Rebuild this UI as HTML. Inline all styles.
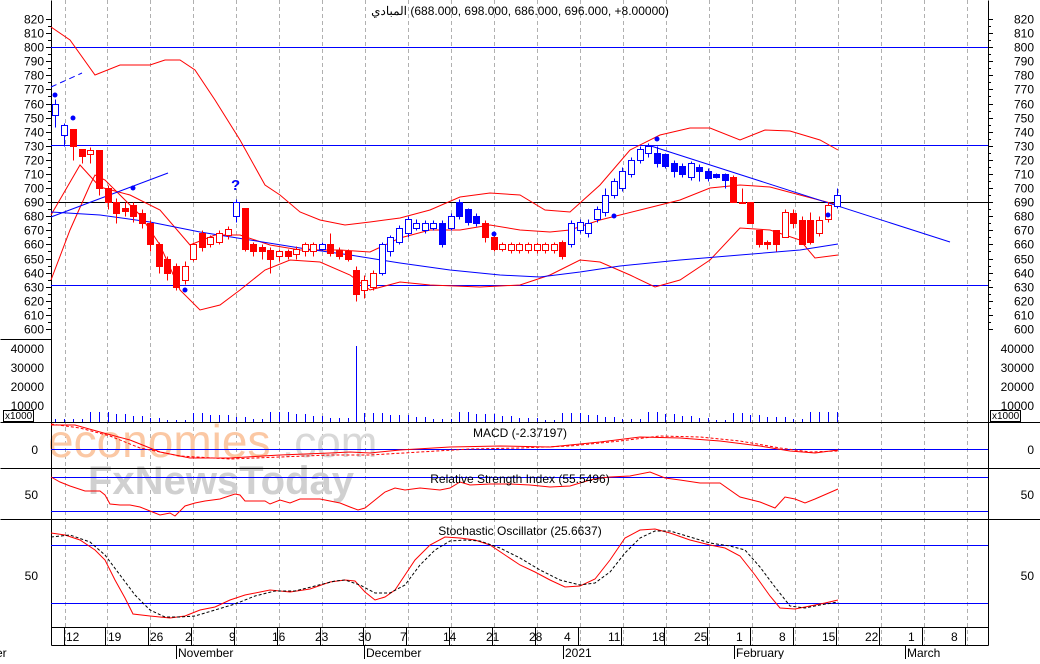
<!DOCTYPE html><html><head><meta charset="utf-8"><style>
body{margin:0;background:#fff;width:1040px;height:659px;overflow:hidden;font-family:"Liberation Sans",sans-serif}
svg text{font-family:"Liberation Sans","Noto Sans CJK SC",sans-serif;font-size:12px;fill:#000}
</style></head><body>
<svg id="s" width="1040" height="659" xmlns="http://www.w3.org/2000/svg">
<rect width="1040" height="659" fill="#fff"/>
<g id="grid" stroke="#b0b0b0" stroke-dasharray="4,3" stroke-width="1"></g>
<g>
<text x="48" y="457" style="font-size:46px;fill:#fbc8a4">economies</text>
<text x="282" y="457" style="font-size:44px;fill:#d8d8d8">.com</text>
<text x="88" y="494" style="font-size:40px;fill:#d0d0d0;font-weight:bold">FxNewsToday</text>
</g>
<g id="main"></g>
<text x="520" y="15" text-anchor="middle" direction="ltr" unicode-bidi="embed">&#x200E;المبادي&#x200E; (688.000, 698.000, 686.000, 696.000, +8.00000)</text>
<text x="520" y="437" text-anchor="middle">MACD (-2.37197)</text>
<text x="520" y="483" text-anchor="middle">Relative Strength Index (55.5496)</text>
<text x="520" y="535" text-anchor="middle">Stochastic Oscillator (25.6637)</text>
</svg>
<script>
const S=document.getElementById('s'),M=document.getElementById('main'),G=document.getElementById('grid');
const NS='http://www.w3.org/2000/svg';
function el(p,t,a,txt){const e=document.createElementNS(NS,t);for(const k in a)e.setAttribute(k,a[k]);if(txt!=null)e.textContent=txt;p.appendChild(e);return e;}
const Y=p=>Math.round(19+(820-p)*1.409)+0.5;
const BL='#0000ff';
[65,107,150,193,236,279,322,365,408,451,494,537,580,623,666,709,752,795,838,881,924,967].forEach(x=>el(G,'line',{x1:x+.5,y1:0,x2:x+.5,y2:645}));
[[51,0,51,645],[988,0,988,645],[0,339,51,339],[0,422,1040,422],[0,468,1040,468],[0,519,1040,519],[51,627,988,627],[51,645,988,645]].forEach(l=>el(M,'line',{x1:l[0]+.5,y1:l[1]+.5,x2:l[2]+.5,y2:l[3]+.5,stroke:'#000'}));
for(let p=600;p<=820;p+=10){const y=Y(p);el(M,'text',{x:44,y:y+4,'text-anchor':'end'},p);el(M,'text',{x:1034,y:y+4,'text-anchor':'end'},p);
el(M,'line',{x1:46,y1:y,x2:51,y2:y,stroke:'#000'});el(M,'line',{x1:988,y1:y,x2:993,y2:y,stroke:'#000'});}
for(let i=0;i<22;i++){const y=Y(605+i*10);el(M,'line',{x1:48,y1:y,x2:51,y2:y,stroke:'#000'});el(M,'line',{x1:988,y1:y,x2:991,y2:y,stroke:'#000'});}
[[40000,349],[30000,368],[20000,387],[10000,406]].forEach(v=>{el(M,'text',{x:44,y:v[1]+4,'text-anchor':'end'},v[0]);el(M,'text',{x:1034,y:v[1]+4,'text-anchor':'end'},v[0]);});
el(M,'rect',{x:3.5,y:410.5,width:30,height:11,fill:'#fff',stroke:'#000'});el(M,'text',{x:5,y:419,style:'font-size:10px'},'x1000');
el(M,'rect',{x:990.5,y:410.5,width:30,height:11,fill:'#fff',stroke:'#000'});el(M,'text',{x:992,y:419,style:'font-size:10px'},'x1000');
el(M,'text',{x:38,y:454,'text-anchor':'end'},'0');el(M,'text',{x:1034,y:454,'text-anchor':'end'},'0');
el(M,'text',{x:38,y:499,'text-anchor':'end'},'50');el(M,'text',{x:1034,y:499,'text-anchor':'end'},'50');
el(M,'text',{x:38,y:580,'text-anchor':'end'},'50');el(M,'text',{x:1034,y:580,'text-anchor':'end'},'50');
[47,145,285,449,477,511,545,603].forEach(h=>el(M,'line',{x1:51,y1:h+.5,x2:988,y2:h+.5,stroke:BL}));
el(M,'line',{x1:51,y1:202.5,x2:988,y2:202.5,stroke:'#000'});
const pl=(pts,c,dash,w)=>el(M,'polyline',{points:pts,fill:'none',stroke:c,'stroke-width':w||1,'stroke-dasharray':dash||'none'});
pl('51,27 70,40 95,75 120,65 150,65 165,60 180,60 195,70 215,100 240,140 265,185 280,195 300,212 320,220 345,225 370,222 400,218 430,210 460,197 490,193 520,195 545,210 570,212 600,185 630,150 660,135 690,128 710,128 740,140 765,130 790,131 820,140 838,150','#ff0000');
pl('51,215 80,165 100,187 130,195 160,210 190,245 215,235 240,235 270,245 300,250 340,250 370,252 400,238 430,230 460,230 490,225 520,230 550,232 570,230 600,220 640,210 680,200 710,188 740,185 770,187 800,195 838,205','#ff0000');
pl('51,280 70,230 90,185 95,175 105,180 120,195 140,215 160,245 180,290 200,310 220,305 240,290 265,270 290,260 320,262 350,275 370,290 400,282 430,285 480,287 520,285 550,275 580,260 600,262 630,275 655,287 680,280 710,260 740,228 770,230 800,240 815,258 838,255','#ff0000');
pl('51,212 100,215 150,222 200,232 250,240 300,248 350,255 400,263 450,270 500,275 540,277 580,272 620,266 680,260 740,255 800,250 838,244',BL);
pl('651,146 950,242',BL);pl('51,217 168,173',BL);pl('51,87 82,73',BL,'6,4');
const C=[[55,752,760,763,743,'b'],[64,738,745,746,730,'b'],[73,742,730,742,720,'r'],[82,728,723,728,718,'r'],[90,724,727,729,718,'r'],[99,727,700,727,695,'r'],[108,700,690,702,685,'r'],[116,690,682,693,675,'r'],[125,686,684,690,680,'r'],[133,688,680,690,676,'r'],[142,682,675,685,672,'r'],[150,675,660,677,655,'r'],[159,660,645,662,640,'r'],[167,650,640,652,635,'r'],[176,645,630,647,628,'r'],[185,635,645,648,632,'r'],[193,650,660,662,648,'r'],[202,668,658,670,655,'r'],[210,660,665,667,658,'r'],[219,662,668,670,660,'r'],[228,667,671,673,664,'r'],[236,680,690,692,676,'b'],[245,686,657,686,655,'r'],[253,660,655,662,652,'r'],[262,658,655,660,650,'r'],[270,656,650,658,640,'r'],[279,652,655,657,648,'r'],[288,655,652,657,650,'r'],[296,653,657,659,650,'r'],[305,655,660,662,652,'r'],[313,655,660,662,652,'r'],[322,657,660,662,655,'b'],[330,660,654,668,652,'r'],[339,656,652,658,650,'r'],[348,655,650,657,648,'r'],[356,642,625,645,620,'r'],[364,628,635,638,622,'r'],[373,630,640,642,628,'r'],[382,640,660,662,638,'b'],[390,655,665,667,652,'b'],[399,662,672,674,660,'b'],[408,668,678,680,665,'b'],[416,672,675,678,670,'b'],[425,670,675,677,668,'b'],[433,672,675,677,670,'b'],[442,675,660,677,658,'b'],[451,672,680,682,670,'b'],[459,690,680,692,678,'b'],[468,685,676,686,674,'b'],[476,680,675,682,673,'b'],[485,675,665,677,662,'r'],[494,665,657,667,655,'r'],[502,657,660,662,655,'r'],[511,656,660,662,654,'r'],[519,656,660,662,654,'r'],[528,656,660,662,654,'r'],[537,656,660,662,654,'r'],[545,656,660,662,654,'r'],[554,656,660,662,654,'r'],[562,662,652,663,650,'r'],[571,660,675,677,658,'b'],[580,670,676,678,668,'b'],[588,668,675,678,665,'b'],[597,678,685,687,676,'b'],[605,683,695,700,680,'b'],[614,695,705,707,693,'b'],[622,700,712,715,698,'b'],[631,710,720,722,708,'b'],[640,720,728,730,718,'b'],[648,725,730,732,722,'b'],[657,725,718,730,715,'b'],[665,724,716,725,714,'b'],[674,718,712,720,708,'b'],[682,716,710,718,708,'b'],[691,708,718,719,706,'b'],[699,715,712,717,705,'b'],[708,712,707,714,705,'b'],[716,710,708,711,707,'b'],[725,710,706,711,700,'b'],[733,708,690,709,690,'r'],[742,690,690,700,690,'r'],[750,690,675,690,675,'r'],[759,670,660,670,658,'r'],[767,662,660,663,657,'r'],[776,670,660,670,655,'r'],[785,665,683,685,665,'r'],[793,682,675,685,672,'r'],[802,677,660,680,660,'r'],[810,677,662,683,660,'r'],[819,668,677,680,666,'r'],[828,678,688,690,676,'r'],[837,687,695,700,686,'b']];
C.forEach(c=>{const col=c[5]=='b'?BL:'#ff0000';const up=c[2]>c[1];
el(M,'line',{x1:c[0]+.5,y1:Y(c[3]),x2:c[0]+.5,y2:Y(c[4]),stroke:col});
const t=Y(Math.max(c[1],c[2])),b=Y(Math.min(c[1],c[2]));
el(M,'rect',{x:c[0]-2.5,y:t,width:6,height:Math.max(1,b-t),fill:up?'#fff':col,stroke:col});
const v=c[0]==356?346:(412+((c[0]*7)%9));el(M,'line',{x1:c[0]+.5,y1:v,x2:c[0]+.5,y2:422,stroke:BL});});
[[55,95],[73,118],[133,188],[185,290],[494,234],[614,216],[657,139],[828,215]].forEach(d=>el(M,'circle',{cx:d[0],cy:d[1],r:2.5,fill:BL}));
el(M,'text',{x:231,y:190,style:'font-size:15px;fill:#0000ff;font-weight:bold'},'?');
pl('51,425 75,425 100,432 130,440 160,452 190,458 230,458 280,455 330,453 350,452 370,453 400,450 450,447 500,446 550,447 600,442 640,437 680,438 720,441 760,446 790,451 815,453 838,450','#ff0000');
pl('51,424 80,428 110,436 140,448 180,456 230,459 280,457 330,455 370,455 420,452 470,449 520,448 570,446 620,441 660,436 700,437 740,441 780,448 810,452 838,451','#ff0000','3,2');
pl('51,477 60,482 70,486 85,491 100,491 105,495 110,504 120,505 130,505 140,507 150,511 160,515 170,513 175,516 185,506 195,503 205,501 220,499 235,494 240,495 245,501 265,501 270,504 280,500 290,503 300,499 320,499 340,503 350,507 358,510 365,508 375,500 385,492 395,488 405,490 420,488 440,490 450,488 460,482 470,485 490,484 510,484 530,485 550,487 570,486 590,480 600,478 610,477 630,476 650,472 665,478 680,480 700,483 720,483 740,497 760,502 775,508 785,497 795,499 805,503 815,499 838,489','#ff0000');
pl('51,533 65,535 80,540 95,550 105,560 115,580 125,598 133,614 150,616 170,618 185,616 200,610 215,607 230,600 245,595 270,590 290,592 310,589 330,582 345,580 355,581 365,592 375,600 385,597 395,590 405,575 415,560 430,545 445,537 460,538 475,540 490,545 505,555 520,565 535,572 550,580 565,587 580,586 595,579 610,560 625,538 640,530 655,529 670,533 690,540 710,545 725,548 740,556 755,575 770,596 780,608 795,609 810,606 825,603 838,600','#ff0000');
pl('51,537 70,535 90,542 105,555 120,575 135,595 150,610 165,617 180,617 195,616 215,610 235,604 255,596 275,591 295,591 315,586 335,581 345,580 360,585 375,593 390,593 405,585 420,565 435,550 450,541 465,540 480,541 500,548 520,558 540,570 560,580 580,585 595,583 610,572 625,553 640,538 655,531 670,531 690,537 710,543 730,546 745,550 760,567 775,587 790,606 805,608 820,605 838,602','#000','3,2');
[['12',66],['19',108],['26',150],['2',185],['9',229],['16',272],['23',315],['30',358],['7',400],['14',443],['21',486],['28',529],['4',564],['11',608],['18',652],['25',694],['1',736],['8',779],['15',822],['22',865],['1',908],['8',951]].forEach(d=>el(M,'text',{x:d[1],y:641},d[0]));
[107,150,193,236,279,322,365,408,451,494,537,580,623,666,709,752,795,838,881,924,967].forEach(x=>el(M,'line',{x1:x-1.5,y1:627,x2:x-1.5,y2:645,stroke:'#000'}));
el(M,'line',{x1:64.5,y1:627,x2:64.5,y2:645,stroke:'#000'});
[[176,'November'],[364,'December'],[563,'2021'],[734,'February'],[905,'March']].forEach(m=>{el(M,'line',{x1:m[0]+.5,y1:645,x2:m[0]+.5,y2:659,stroke:'#000'});el(M,'text',{x:m[0]+2,y:657},m[1]);});
el(M,'text',{x:-4,y:657},'er');
</script>
</body></html>
